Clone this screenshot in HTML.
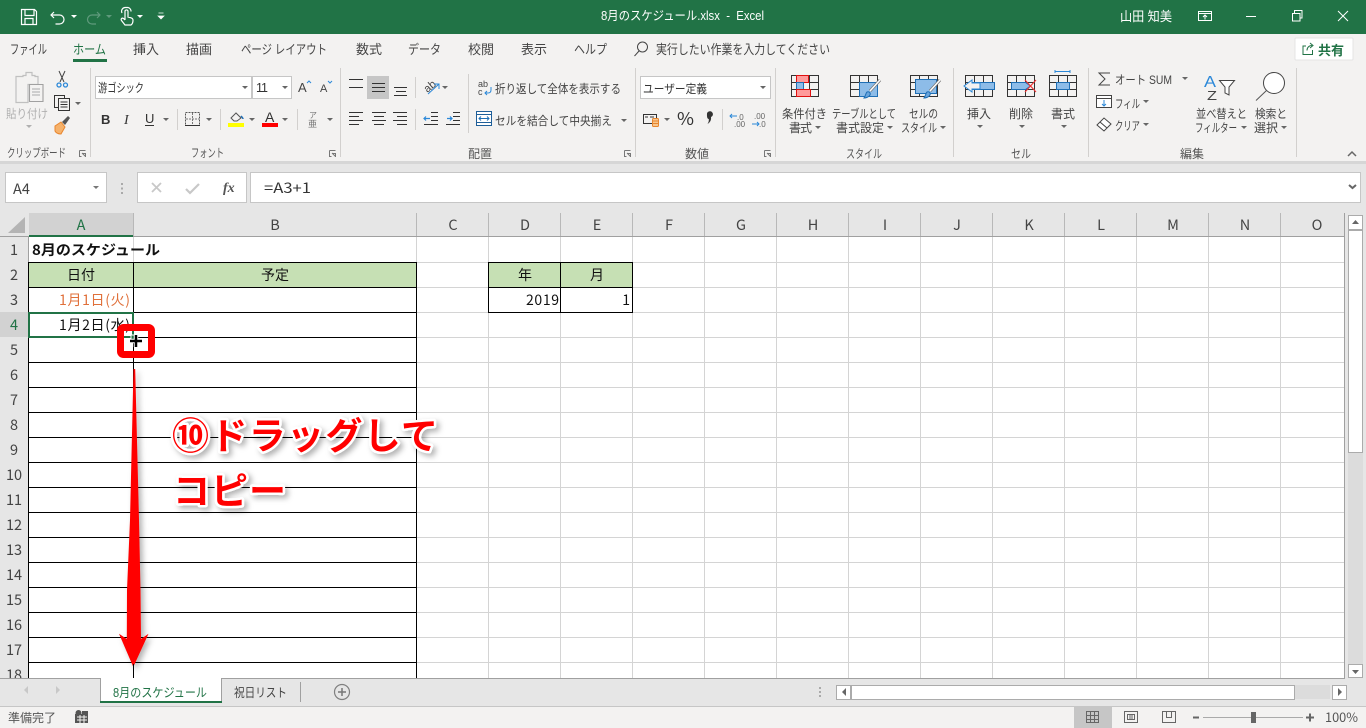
<!DOCTYPE html>
<html lang="ja"><head><meta charset="utf-8"><title>8月のスケジュール.xlsx - Excel</title>
<style>
html,body{margin:0;padding:0;width:1366px;height:728px;overflow:hidden;background:#fff}
svg{display:block;position:absolute;left:0;top:0}
text{font-family:"Liberation Sans","Noto Sans CJK JP",sans-serif}
.j{font-family:"Noto Sans CJK JP",sans-serif}
.r{font-size:12px;fill:#444}
.t{font-size:13px;fill:#444}
.g{font-size:12px;fill:#555}
.h{font-size:14.5px;fill:#444;text-anchor:middle;font-family:"Noto Sans CJK JP",sans-serif}
.c{font-size:14px;fill:#111;font-family:"Noto Sans CJK JP",sans-serif}
.d{fill:#666}
.ic{fill:none;stroke:#444;stroke-width:1}
.bl{fill:#8dbce8;stroke:#1f6fb5;stroke-width:1}
</style></head><body>
<svg width="1366" height="728" viewBox="0 0 1366 728" shape-rendering="auto">
<defs>
<filter id="sh" x="-20%" y="-20%" width="150%" height="150%"><feDropShadow dx="3" dy="3" stdDeviation="3" flood-color="#000" flood-opacity=".3"/></filter>
<path id="dr" d="M0 0h6l-3 3z"/>
</defs>
<!-- backgrounds -->
<rect width="1366" height="34" fill="#217346"/>
<rect y="34" width="1366" height="127" fill="#f3f2f1"/>
<rect y="161" width="1366" height="52" fill="#e6e6e6"/>
<rect y="161" width="1366" height="3" fill="#d6d6d6"/>
<rect y="213" width="1366" height="24" fill="#e6e6e6"/>
<rect y="237" width="28" height="442" fill="#e6e6e6"/>
<rect x="1345" y="213" width="21" height="466" fill="#e6e6e6"/>
<rect y="679" width="1366" height="27" fill="#e6e6e6"/>
<rect y="706" width="1366" height="1" fill="#c6c6c6"/>
<rect y="707" width="1366" height="21" fill="#f3f2f1"/>

<!-- title bar -->
<g fill="none" stroke="#fff" stroke-width="1.2">
<path d="M21.5 9.5h13l2 2v13h-15zM25 9.5v6h9v-6M25 24.5v-6h8v6"/>
<path d="M54 12l-3 3 3 3M51.5 15h8a4.5 4.5 0 0 1 0 9h-4"/>
<path d="M125 20v-9a1.6 1.6 0 0 1 3 0v6l3 .8c1.5.5 2 1 2 2.5 0 2-1 4-2 4.700h-6l-3.500-4.500c-1-1.500 .5-3 2-2l1.500 1.500M122 13a3.800 3.800 0 0 1 3-5.500h3a3.800 3.800 0 0 1 3 4" />
<path d="M97 12l3 3-3 3M100 15h-8a4.500 4.500 0 0 0 0 9h4" stroke="#5f9a7c"/>
</g>
<use href="#dr" x="71" y="15" fill="#fff"/><use href="#dr" x="106" y="15" fill="#5f9a7c"/><use href="#dr" x="137" y="15" fill="#fff"/>
<path d="M158.500 13h5M158 16h6l-3 3z" fill="#fff" stroke="#fff" stroke-width=".7"/>
<text x="601" y="20" font-size="12.500" fill="#fff" textLength="163" lengthAdjust="spacingAndGlyphs" xml:space="preserve">8月のスケジュール.xlsx  -  Excel</text>
<text x="1120" y="21" font-size="13" fill="#fff" textLength="52" lengthAdjust="spacingAndGlyphs" xml:space="preserve">山田 知美</text>
<g fill="none" stroke="#fff" stroke-width="1">
<path d="M1198.500 11.500h13v9h-13zM1198.500 13.500h13M1205 19.500v-4M1203 17l2-2 2 2"/>
<path d="M1246 16.500h10"/>
<path d="M1292.500 13.500h7.500v7.500h-7.500zM1294.500 13v-2.500h7.500v7.500h-2"/>
<path d="M1338 11l10 10M1348 11l-10 10"/>
</g>

<!-- tabs -->
<text class="t" x="10" y="54" textLength="37" lengthAdjust="spacingAndGlyphs">ファイル</text>
<text class="t" x="73" y="54" textLength="33" lengthAdjust="spacingAndGlyphs" fill="#217346" style="fill:#217346">ホーム</text>
<rect x="73" y="59" width="34" height="3" fill="#217346"/>
<text class="t" x="133" y="54" textLength="26">挿入</text>
<text class="t" x="186" y="54" textLength="26">描画</text>
<text class="t" x="241" y="54" textLength="86" lengthAdjust="spacingAndGlyphs" xml:space="preserve">ページ レイアウト</text>
<text class="t" x="356" y="54" textLength="26">数式</text>
<text class="t" x="408" y="54" textLength="33" lengthAdjust="spacingAndGlyphs">データ</text>
<text class="t" x="468" y="54" textLength="26">校閲</text>
<text class="t" x="521" y="54" textLength="26">表示</text>
<text class="t" x="574" y="54" textLength="33" lengthAdjust="spacingAndGlyphs">ヘルプ</text>
<g class="ic"><circle cx="642.500" cy="47" r="5"/><path d="M639 51l-4.500 5"/></g>
<text class="t" x="656" y="54" textLength="174" lengthAdjust="spacingAndGlyphs">実行したい作業を入力してください</text>
<rect x="1295" y="38" width="58" height="22" rx="1" fill="#fff" stroke="#e4e4e4"/>
<g fill="none" stroke="#217346"><path d="M1312.500 50v4.500h-9.500v-8.500h3M1307 50.500c0-3 2-5 5-5M1310 43l3 2.500-3 2.500"/></g>
<text x="1318" y="55" font-size="13" font-weight="bold" fill="#217346" textLength="26">共有</text>

<!-- group separators -->
<g fill="#d2d0ce">
<rect x="90" y="68" width="1" height="89"/><rect x="340" y="68" width="1" height="89"/>
<rect x="468" y="74" width="1" height="59"/><rect x="635" y="68" width="1" height="89"/>
<rect x="775" y="68" width="1" height="89"/><rect x="953" y="68" width="1" height="89"/>
<rect x="1088" y="68" width="1" height="89"/><rect x="1296" y="68" width="1" height="89"/>
<rect x="177" y="109" width="1" height="21"/><rect x="220" y="109" width="1" height="21"/><rect x="297" y="109" width="1" height="21"/>
<rect x="415" y="77" width="1" height="21"/><rect x="415" y="109" width="1" height="21"/><rect x="722" y="109" width="1" height="21"/>
</g>

<!-- clipboard -->
<g fill="#f3f2f1" stroke="#c0c0c0" stroke-width="1.200">
<path d="M16 76.500h7v-1h3v-3h6v3h3v1h3v8h-10v18h-12z"/>
<path d="M29.500 84.500h13.500v17h-13.500z" stroke="#a0a0a0" stroke-width="1.100"/></g>
<path d="M32 89h8M32 92h8M32 95h8" stroke="#aaa"/>
<text x="6" y="118" font-size="12" fill="#b0b0b0" textLength="42" lengthAdjust="spacingAndGlyphs">貼り付け</text>
<use href="#dr" x="26" y="125" fill="#b0b0b0"/>
<g fill="none" stroke="#444"><path d="M59 71l5 11M65 71l-5 11"/><g stroke="#2b88d8" stroke-width="1.300"><circle cx="59" cy="85" r="2"/><circle cx="65.500" cy="85" r="2"/></g></g>
<g fill="#f3f2f1" stroke="#333"><path d="M54.500 95.500h10v12h-10z"/><path d="M58.500 98.500h11v12h-11z"/><path d="M60.500 102h7M60.500 104.500h7M60.500 107h7" fill="none"/></g>
<use href="#dr" x="75" y="102" fill="#666"/>
<path d="M55 126l6-4 4 5-4 7c-3 0-5-1-6-3z" fill="#f6b26b" stroke="#e8862e"/>
<path d="M62 122l6-6 2 2-5 7z" fill="#555"/>
<text class="g" x="7" y="157" textLength="59" lengthAdjust="spacingAndGlyphs">クリップボード</text>
<g id="lc" fill="none" stroke="#777" stroke-width="1"><path d="M79.500 150.500h6M79.500 150.500v6h2M85.500 157v-3.500h-3.500M82 153l3.500 3.500"/></g>

<!-- font -->
<rect x="95.500" y="76.500" width="156" height="22" fill="#fff" stroke="#c6c6c6"/>
<rect x="252.500" y="76.500" width="39" height="22" fill="#fff" stroke="#c6c6c6"/>
<text x="98" y="92" font-size="12" fill="#333" textLength="46" lengthAdjust="spacingAndGlyphs">游ゴシック</text>
<text x="256" y="92" font-size="12.500" fill="#333" textLength="12">11</text>
<use href="#dr" x="242" y="86" class="d"/><use href="#dr" x="282" y="86" class="d"/>
<text x="298" y="92" font-size="13" fill="#444">A</text><path d="M307 83l2-2 2 2" stroke="#2b88d8" fill="none"/>
<text x="320" y="92" font-size="11" fill="#444">A</text><path d="M328 81l2 2 2-2" stroke="#2b88d8" fill="none"/>
<text x="101" y="124" font-size="13" font-weight="bold" fill="#333">B</text>
<text x="124" y="124" font-size="14" font-style="italic" fill="#333" style="font-family:'Liberation Serif',serif">I</text>
<text x="145" y="123" font-size="13" fill="#333">U</text><rect x="145" y="125" width="9" height="1" fill="#333"/>
<use href="#dr" x="163" y="118" class="d"/>
<path d="M185.500 112.500h14v13h-14z" fill="none" stroke="#555" stroke-dasharray="2 1"/><path d="M185 125.500h15" stroke="#333"/><path d="M192.500 113v12M186 119h13" stroke="#777" stroke-dasharray="2 1"/>
<use href="#dr" x="206" y="118" class="d"/>
<path d="M231 118l5-5 5 5-4 3h-3z" fill="none" stroke="#555"/><path d="M241 116c1 1 2 2 2 3" stroke="#1f6fb5" stroke-width="1.500" fill="none"/>
<rect x="228" y="123" width="16" height="4" fill="#ffff00"/>
<use href="#dr" x="249" y="118" class="d"/>
<text x="265" y="122" font-size="14" fill="#333">A</text>
<rect x="262" y="123" width="16" height="4" fill="#f00"/>
<use href="#dr" x="282" y="118" class="d"/>
<text x="309" y="118" font-size="8" fill="#777">ア</text><text x="308" y="127" font-size="9" fill="#777">亜</text>
<use href="#dr" x="327" y="118" class="d"/>
<text class="g" x="191" y="157" textLength="33" lengthAdjust="spacingAndGlyphs">フォント</text>
<use href="#lc" x="250"/>

<!-- alignment -->
<rect x="367" y="76" width="22" height="23" fill="#c6c6c6"/>
<g stroke="#333" fill="none">
<path d="M349 79.500h14M349 87.500h14"/>
<path d="M372 83.500h13M372 87.500h13M372 91.500h13" />
<path d="M394 87.500h13M396 91.500h10M394 95.500h13"/>
<path d="M349 112.500h14M349 116.500h10M349 120.500h14M349 124.500h10"/>
<path d="M372 112.500h14M374 116.500h10M372 120.500h14M374 124.500h10"/>
<path d="M393 112.500h14M397 116.500h10M393 120.500h14M397 124.500h10"/>
<path d="M431 112.500h7M431 116.500h7M431 120.500h7M424 124.500h14"/>
<path d="M453 112.500h7M453 116.500h7M453 120.500h7M446 124.500h14"/>
</g>
<path d="M424 118.500h6M426 116.500l-2 2 2 2M447 118.500h5M450 116.500l2 2-2 2" stroke="#2b88d8" fill="none" stroke-width="1.200"/>
<text x="423" y="91" font-size="11" fill="#444" transform="rotate(-40 428 86)">ab</text>
<path d="M428 94l11-10M434 84h5v5" stroke="#2b88d8" fill="none"/>
<use href="#dr" x="442" y="86" class="d"/>
<text x="478" y="87" font-size="9" fill="#444">ab</text><text x="478" y="95" font-size="9" fill="#444">c</text>
<path d="M491 87v3c0 2-1 3-3 3h-3M487 91l-2 2 2 2" stroke="#2b88d8" fill="none"/>
<text class="r" x="495" y="93" textLength="126" lengthAdjust="spacingAndGlyphs">折り返して全体を表示する</text>
<rect x="476.500" y="111.500" width="15" height="14" fill="#fff" stroke="#1f5f99"/><path d="M477 114.500h14M477 122.500h14" stroke="#1f5f99"/>
<path d="M479 118.500h10M481 116.500l-2 2 2 2M487 116.500l2 2-2 2" stroke="#1f6fb5" fill="none"/>
<text class="r" x="495" y="125" textLength="117" lengthAdjust="spacingAndGlyphs">セルを結合して中央揃え</text>
<use href="#dr" x="621" y="119" class="d"/>
<text class="g" x="468" y="158" textLength="24">配置</text>
<use href="#lc" x="545"/>

<!-- number -->
<rect x="640.500" y="76.500" width="130" height="22" fill="#fff" stroke="#c6c6c6"/>
<text x="643" y="93" font-size="12" fill="#333" textLength="64" lengthAdjust="spacingAndGlyphs">ユーザー定義</text>
<use href="#dr" x="760" y="86" class="d"/>
<rect x="643.500" y="114.500" width="13" height="9" fill="none" stroke="#333"/><path d="M645 117h3M650 117h4" stroke="#333"/>
<rect x="652.500" y="118.500" width="6" height="8" rx="1" fill="#f8c78e" stroke="#e8862e"/><path d="M653 121h5M653 123.500h5" stroke="#e8862e"/>
<use href="#dr" x="664" y="118" class="d"/>
<text x="677" y="125" font-size="18" fill="#333" textLength="17" lengthAdjust="spacingAndGlyphs" style="font-family:'Noto Sans CJK JP',sans-serif">%</text>
<path d="M707 113.500a3 3 0 1 1 4 3.500c.5 3-1 5.500-3.500 7 1-1.500 1.500-3 1.300-5-1.500 0-2-2-1.800-5.500z" fill="#333"/>
<text x="737" y="120" font-size="8" fill="#666">.0</text><text x="734" y="127" font-size="8" fill="#666">.00</text>
<path d="M737 116h-7M732 114l-2 2 2 2" stroke="#2b88d8" fill="none"/>
<text x="754" y="119" font-size="8" fill="#666">.00</text><text x="759" y="127" font-size="8" fill="#666">.0</text>
<path d="M752 124h7M757 122l2 2-2 2" stroke="#2b88d8" fill="none"/>
<text class="g" x="685" y="158" textLength="24">数値</text>
<use href="#lc" x="685"/>

<!-- styles -->
<g fill="none" stroke="#333"><path d="M791.500 75.500h27v21h-27zM791.500 82.500h27M791.500 89.500h27M800.500 75.500v21M809.500 75.500v21"/></g>
<rect x="796.500" y="75.500" width="12" height="7" fill="#ff9a9a" stroke="#e01010"/><rect x="796.500" y="82.500" width="7" height="7" fill="#8dbce8" stroke="#1f6fb5"/><rect x="796.500" y="89.500" width="14" height="7" fill="#ff9a9a" stroke="#e01010"/>
<text class="r" x="782" y="118" textLength="45" lengthAdjust="spacingAndGlyphs">条件付き</text>
<text class="r" x="789" y="132" textLength="23">書式</text><use href="#dr" x="815" y="126" class="d"/>
<g fill="none" stroke="#333"><path d="M850.500 75.500h27v21h-27zM850.500 82.500h27M850.500 89.500h27M859.500 75.500v21M868.500 75.500v21"/></g>
<rect x="859.500" y="82.500" width="18" height="14" class="bl"/>
<path d="M880 80l-10 11" stroke="#777" stroke-width="3" fill="none"/><path d="M880 80l-10 11" stroke="#fff" stroke-width="1.500" fill="none"/><path d="M864 98c2 0 5-1 6-3 1-2-1-4-3-3-1 .5-1 3-3 6z" fill="#6aa5dd" stroke="#1f6fb5"/>
<text class="r" x="832" y="118" textLength="64" lengthAdjust="spacingAndGlyphs">テーブルとして</text>
<text class="r" x="836" y="132" textLength="48">書式設定</text><use href="#dr" x="887" y="126" class="d"/>
<g fill="none" stroke="#333"><path d="M910.500 75.500h27v21h-27zM910.500 82.500h27M910.500 89.500h27M919.500 75.500v21M928.500 75.500v21"/></g>
<rect x="915.500" y="79.500" width="21" height="14" class="bl"/>
<path d="M940 80l-10 11" stroke="#777" stroke-width="3" fill="none"/><path d="M940 80l-10 11" stroke="#fff" stroke-width="1.500" fill="none"/><path d="M924 98c2 0 5-1 6-3 1-2-1-4-3-3-1 .5-1 3-3 6z" fill="#6aa5dd" stroke="#1f6fb5"/>
<text class="r" x="909" y="118" textLength="29" lengthAdjust="spacingAndGlyphs">セルの</text>
<text class="r" x="901" y="132" textLength="36" lengthAdjust="spacingAndGlyphs">スタイル</text><use href="#dr" x="940" y="126" class="d"/>
<text class="g" x="846" y="158" textLength="36" lengthAdjust="spacingAndGlyphs">スタイル</text>

<!-- cells -->
<g fill="none" stroke="#333"><path d="M965.500 75.500h27v21h-27zM965.500 82.500h27M965.500 89.500h27M974.500 75.500v21M983.500 75.500v21"/></g>
<rect x="971.500" y="82.500" width="23" height="7" class="bl"/>
<path d="M972 80l-8 6 8 6v-3h8v-6h-8z" fill="#f3f2f1" stroke="#2b88d8"/>
<text class="r" x="967" y="118" textLength="24">挿入</text><use href="#dr" x="977" y="125" class="d"/>
<g fill="none" stroke="#333"><path d="M1007.500 75.500h27v21h-27zM1007.500 82.500h27M1007.500 89.500h27M1016.500 75.500v21M1025.500 75.500v21"/></g>
<path d="M1011.500 82.500h14l5 3.500-5 3.500h-14z" fill="#8dbce8" stroke="#1f6fb5"/>
<path d="M1025 80l11 12M1036 80l-11 12" stroke="#f03030" stroke-width="1.100"/>
<text class="r" x="1009" y="118" textLength="24">削除</text><use href="#dr" x="1019" y="125" class="d"/>
<path d="M1055 71.500h15M1055 70v3M1070 70v3" stroke="#2b88d8" fill="none"/>
<g fill="none" stroke="#333"><path d="M1049.500 75.500h27v21h-27zM1049.500 82.500h27M1049.500 89.500h27M1058.500 75.500v21M1067.500 75.500v21"/></g>
<rect x="1056.500" y="82.500" width="13" height="7" class="bl"/>
<text class="r" x="1051" y="118" textLength="24">書式</text><use href="#dr" x="1061" y="125" class="d"/>
<text class="g" x="1011" y="158" textLength="20" lengthAdjust="spacingAndGlyphs">セル</text>

<!-- editing -->
<path d="M1110 73h-11l6 6-6 6h11" fill="none" stroke="#444"/>
<text class="r" x="1115" y="84" textLength="57" lengthAdjust="spacingAndGlyphs" xml:space="preserve">オート SUM</text>
<use href="#dr" x="1182" y="77" class="d"/>
<rect x="1096.500" y="95.500" width="15" height="12" fill="#fff" stroke="#444"/><path d="M1097 98.500h14" stroke="#444"/><path d="M1104 100v6M1102 104l2 2 2-2" stroke="#2b88d8" fill="none"/>
<text class="r" x="1115" y="108" textLength="25" lengthAdjust="spacingAndGlyphs">フィル</text><use href="#dr" x="1143" y="100" class="d"/>
<path d="M1097 125l7-7 7 6-7 7zM1100 122l7 6" fill="#fff" stroke="#444"/>
<text class="r" x="1115" y="130" textLength="25" lengthAdjust="spacingAndGlyphs">クリア</text><use href="#dr" x="1143" y="123" class="d"/>
<text x="1204" y="87" font-size="16" fill="#2b88d8" textLength="12" lengthAdjust="spacingAndGlyphs">A</text>
<text x="1207" y="100" font-size="13" fill="#444" textLength="10" lengthAdjust="spacingAndGlyphs">Z</text>
<path d="M1219.500 80.500h15l-5.500 6.500v8l-4 -2v-6z" fill="#fff" stroke="#444"/>
<text class="r" x="1196" y="118" textLength="51" lengthAdjust="spacingAndGlyphs">並べ替えと</text>
<text class="r" x="1195" y="132" textLength="42" lengthAdjust="spacingAndGlyphs">フィルター</text><use href="#dr" x="1241" y="126" class="d"/>
<circle cx="1274" cy="83" r="10.500" fill="#fff" stroke="#444"/><path d="M1266.500 90.500l-10.500 10" stroke="#555" fill="none"/>
<text class="r" x="1255" y="118" textLength="32" lengthAdjust="spacingAndGlyphs">検索と</text>
<text class="r" x="1254" y="132" textLength="24">選択</text><use href="#dr" x="1281" y="126" class="d"/>
<text class="g" x="1180" y="158" textLength="24">編集</text>
<path d="M1348 156l4-4 4 4" stroke="#666" stroke-width="1.500" fill="none"/>

<!-- formula bar -->
<rect x="5.500" y="172.500" width="101" height="30" fill="#fff" stroke="#c6c6c6"/>
<text x="13" y="194" font-size="14.500" fill="#444" style="font-family:'Noto Sans CJK JP',sans-serif">A4</text>
<use href="#dr" x="93" y="186" fill="#777"/>
<path d="M122 183v2M122 187.500v2M122 192v2" stroke="#aaa" stroke-width="2"/>
<rect x="137.500" y="172.500" width="109" height="30" fill="#fff" stroke="#c6c6c6"/>
<path d="M152 183l9 9M161 183l-9 9" stroke="#c8c8c8" stroke-width="1.800"/>
<path d="M186 189l4 4 9-9" stroke="#c8c8c8" stroke-width="2.200" fill="none"/>
<text x="223" y="192" font-size="14" font-style="italic" font-weight="bold" fill="#555" style="font-family:'Liberation Serif',serif">fx</text>
<rect x="250.500" y="172.500" width="1110" height="30" fill="#fff" stroke="#c6c6c6"/>
<text x="264" y="193" font-size="14" fill="#333" textLength="47" lengthAdjust="spacingAndGlyphs" style="font-family:'Noto Sans CJK JP',sans-serif">=A3+1</text>
<path d="M1349 185l3.500 3 3.500-3" stroke="#666" stroke-width="2" fill="none"/>

<!-- headers -->
<path d="M8 233L25 217V233Z" fill="#b4b4b4"/>
<rect x="29" y="213" width="104" height="24" fill="#d2d2d2"/>
<rect y="312" x="0" width="28" height="25" fill="#d2d2d2"/>
<rect y="236" x="0" width="1345" height="1" fill="#a0a0a0"/>
<rect y="237" x="28" width="1" height="441" fill="#a0a0a0"/>
<rect x="29" y="235" width="104" height="2" fill="#217346"/>
<g fill="#b8b8b8">
<rect x="133" y="213" width="1" height="23"/><rect x="416" y="213" width="1" height="23"/><rect x="488" y="213" width="1" height="23"/><rect x="560" y="213" width="1" height="23"/><rect x="632" y="213" width="1" height="23"/><rect x="704" y="213" width="1" height="23"/><rect x="776" y="213" width="1" height="23"/><rect x="848" y="213" width="1" height="23"/><rect x="920" y="213" width="1" height="23"/><rect x="992" y="213" width="1" height="23"/><rect x="1064" y="213" width="1" height="23"/><rect x="1136" y="213" width="1" height="23"/><rect x="1208" y="213" width="1" height="23"/><rect x="1280" y="213" width="1" height="23"/>
</g>
<text class="h" x="81" y="230" style="fill:#217346">A</text><text class="h" x="275" y="230">B</text><text class="h" x="453" y="230">C</text><text class="h" x="525" y="230">D</text><text class="h" x="597" y="230">E</text><text class="h" x="669" y="230">F</text><text class="h" x="741" y="230">G</text><text class="h" x="813" y="230">H</text><text class="h" x="885" y="230">I</text><text class="h" x="957" y="230">J</text><text class="h" x="1029" y="230">K</text><text class="h" x="1101" y="230">L</text><text class="h" x="1173" y="230">M</text><text class="h" x="1245" y="230">N</text><text class="h" x="1317" y="230">O</text>
<g class="hr">
<text class="h" x="14" y="255">1</text><text class="h" x="14" y="280">2</text><text class="h" x="14" y="305">3</text><text class="h" x="14" y="330" style="fill:#217346">4</text><text class="h" x="14" y="355">5</text><text class="h" x="14" y="380">6</text><text class="h" x="14" y="405">7</text><text class="h" x="14" y="430">8</text><text class="h" x="14" y="455">9</text><text class="h" x="14" y="480">10</text><text class="h" x="14" y="505">11</text><text class="h" x="14" y="530">12</text><text class="h" x="14" y="555">13</text><text class="h" x="14" y="580">14</text><text class="h" x="14" y="605">15</text><text class="h" x="14" y="630">16</text><text class="h" x="14" y="655">17</text><text class="h" x="14" y="680">18</text>
</g>
<rect x="0" y="678" width="29" height="3" fill="#e6e6e6"/>

<!-- grid -->
<rect x="29" y="263" width="104" height="24" fill="#c6e0b4"/><rect x="134" y="263" width="282" height="24" fill="#c6e0b4"/>
<rect x="489" y="263" width="71" height="24" fill="#c6e0b4"/><rect x="561" y="263" width="71" height="24" fill="#c6e0b4"/>
<path d="M417 262.500H1345M417 287.500H1345M417 312.500H1345M417 337.500H1345M417 362.500H1345M417 387.500H1345M417 412.500H1345M417 437.500H1345M417 462.500H1345M417 487.500H1345M417 512.500H1345M417 537.500H1345M417 562.500H1345M417 587.500H1345M417 612.500H1345M417 637.500H1345M417 662.500H1345M416.500 237V262M133.500 237V262M488.500 237V678M560.500 237V678M632.500 237V678M704.500 237V678M776.500 237V678M848.500 237V678M920.500 237V678M992.500 237V678M1064.500 237V678M1136.500 237V678M1208.500 237V678M1280.500 237V678" stroke="#d4d4d4" fill="none"/>
<rect x="1344" y="213" width="1" height="466" fill="#a0a0a0"/>
<path d="M28.500 262V678M133.500 262V678M416.500 262V678M28 262.500H417M28 287.500H417M28 312.500H417M28 337.500H417M28 362.500H417M28 387.500H417M28 412.500H417M28 437.500H417M28 462.500H417M28 487.500H417M28 512.500H417M28 537.500H417M28 562.500H417M28 587.500H417M28 612.500H417M28 637.500H417M28 662.500H417M488.500 262V312M560.500 262V312M632.500 262V312M488 262.500H633M488 287.500H633M488 312.500H633" stroke="#000" fill="none"/>
<rect x="0" y="678" width="1345" height="1" fill="#a0a0a0"/>

<!-- cell text -->
<text class="c" x="32" y="255" font-weight="bold" textLength="128" lengthAdjust="spacingAndGlyphs">8月のスケジュール</text>
<text class="c" x="81" y="280" text-anchor="middle">日付</text>
<text class="c" x="275" y="280" text-anchor="middle">予定</text>
<text class="c" x="59" y="305" textLength="71" lengthAdjust="spacing" style="fill:#e0703a">1月1日(火)</text>
<text class="c" x="59" y="330" textLength="71" lengthAdjust="spacing">1月2日(水)</text>
<text class="c" x="525" y="280" text-anchor="middle">年</text>
<text class="c" x="597" y="280" text-anchor="middle">月</text>
<text class="c" x="526" y="305" textLength="33" lengthAdjust="spacing">2019</text>
<text class="c" x="630" y="305" text-anchor="end">1</text>

<!-- selection -->
<rect x="29" y="313" width="104" height="24" fill="none" stroke="#217346" stroke-width="2"/>
<rect x="131" y="335" width="5" height="5" fill="#217346" stroke="#fff"/>

<!-- annotations -->
<rect x="120.500" y="327.500" width="31" height="27" rx="3" fill="none" stroke="#f00" stroke-width="7"/>
<path d="M136 335v12M130 341h12" stroke="#fff" stroke-width="4.500"/>
<path d="M136 335v12M130 341h12" stroke="#000" stroke-width="2.500"/>
<g filter="url(#sh)">
<path d="M133.500 369L135.200 369L139 520L140.500 590L141 639L148.500 633.700L133.300 667L119 633.700L126.800 639L127 590L130 520Z" fill="#f00"/>
</g>
<g filter="url(#sh)" font-weight="bold">
<text x="172" y="449" font-size="37" fill="#f00" stroke="#fff" stroke-width="5" stroke-linejoin="round" paint-order="stroke" textLength="266" style="font-family:'Noto Sans CJK JP',sans-serif">⑩ドラッグして</text>
<text x="173" y="504" font-size="37" fill="#f00" stroke="#fff" stroke-width="5" stroke-linejoin="round" paint-order="stroke" textLength="113" style="font-family:'Noto Sans CJK JP',sans-serif">コピー</text>
</g>

<!-- vertical scrollbar -->
<rect x="1348" y="215" width="15" height="463" fill="#dcdcdc"/>
<rect x="1348.500" y="215.500" width="14" height="14" fill="#fff" stroke="#ababab"/>
<path d="M1352 224h7l-3.500-4z" fill="#666"/>
<rect x="1348.500" y="230.500" width="14" height="222" fill="#fff" stroke="#ababab"/>
<rect x="1348.500" y="664.500" width="14" height="13" fill="#fff" stroke="#ababab"/>
<path d="M1352 670h7l-3.500 4z" fill="#666"/>

<!-- sheet tabs -->
<path d="M28 686l-4 4 4 4z" fill="#c8c8c8"/><path d="M56 686l4 4-4 4z" fill="#c8c8c8"/>
<rect x="100" y="678" width="121" height="25" fill="#fff"/>
<rect x="100" y="678" width="1" height="25" fill="#a0a0a0"/><rect x="221" y="678" width="1" height="25" fill="#a0a0a0"/>
<rect x="133" y="664" width="1" height="14" fill="#000"/>
<rect x="100" y="701" width="122" height="2" fill="#217346"/>
<text x="113" y="697" font-size="12.500" fill="#217346" textLength="94" lengthAdjust="spacingAndGlyphs">8月のスケジュール</text>
<text x="234" y="697" font-size="12.500" fill="#444" textLength="53" lengthAdjust="spacingAndGlyphs">祝日リスト</text>
<rect x="300" y="682" width="1" height="20" fill="#a0a0a0"/>
<circle cx="342" cy="692" r="7.500" fill="none" stroke="#808080" stroke-width="1.200"/><path d="M342 688v8M338 692h8" stroke="#777" stroke-width="1.500"/>
<path d="M820 687v2M820 691v2M820 695v2" stroke="#aaa" stroke-width="2"/>

<!-- h scrollbar -->
<rect x="836" y="685" width="494" height="14" fill="#dcdcdc"/>
<rect x="836.500" y="685.500" width="14" height="14" fill="#fff" stroke="#ababab"/>
<path d="M846 688v8l-4-4z" fill="#666"/>
<rect x="851.500" y="685.500" width="443" height="14" fill="#fff" stroke="#ababab"/>
<rect x="1332.500" y="685.500" width="14" height="14" fill="#fff" stroke="#ababab"/>
<path d="M1338 688v8l4-4z" fill="#666"/>

<!-- status -->
<text x="8" y="722" font-size="12" fill="#555" textLength="48">準備完了</text>
<g fill="#555"><circle cx="78.500" cy="713" r="3"/><rect x="75" y="714" width="13" height="9"/><rect x="82" y="711" width="6" height="3"/></g>
<path d="M77 717h10M77 720h10M80 715v8M84 715v8" stroke="#f3f2f1"/>
<rect x="1074" y="707" width="38" height="21" fill="#c6c6c6"/>
<g fill="none" stroke="#666"><path d="M1086.500 711.500h12v11h-12zM1086.500 715.500h12M1086.500 719.500h12M1090.500 711.500v11M1094.500 711.500v11"/>
<path d="M1124.500 711.500h13v11h-13zM1127.500 714.500h7v5h-7zM1129 716h4M1129 718h4"/>
<path d="M1162.500 711.500h13v11h-13zM1166.500 711.500v6h5v-6"/></g>
<rect x="1193" y="716.500" width="6" height="2" fill="#666"/>
<rect x="1203" y="717" width="100" height="1" fill="#aaa"/>
<rect x="1251" y="712" width="5" height="11" fill="#666"/>
<path d="M1306 717.500h8M1310 713.500v8" stroke="#666" stroke-width="2"/>
<text x="1325" y="722" font-size="12.500" fill="#555" textLength="33" lengthAdjust="spacingAndGlyphs" style="font-family:'Noto Sans CJK JP',sans-serif">100%</text>
</svg>
</body></html>
